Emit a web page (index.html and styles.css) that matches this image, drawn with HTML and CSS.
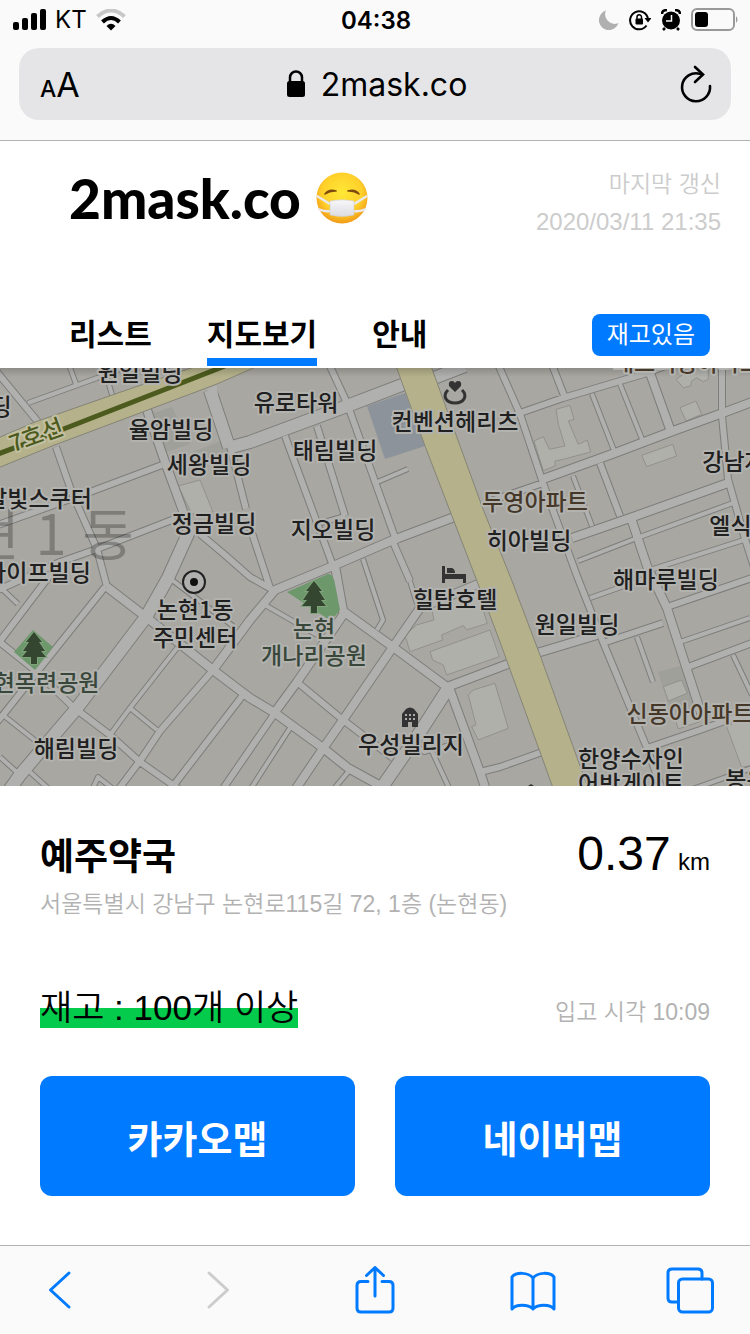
FILE: index.html
```html
<!DOCTYPE html>
<html lang="ko">
<head>
<meta charset="utf-8">
<meta name="viewport" content="width=device-width, initial-scale=1">
<title>2mask.co</title>
<link rel="stylesheet" href="styles.css">
</head>
<body>
<div class="browser-top">
  <div class="status">
    <div class="status-side">
      <svg width="34" height="22" viewBox="0 0 34 22"><rect x="0" y="13" width="6" height="8" rx="2"/><rect x="9" y="9" width="6" height="12" rx="2"/><rect x="18" y="4" width="6" height="17" rx="2"/><rect x="27" y="0" width="6" height="21" rx="2"/></svg>
      <span class="carrier">KT</span>
      <svg width="32" height="22" viewBox="0 0 32 22"><path d="M2.5 7.5Q16-4.500 29.500 7.500" fill="none" stroke="#c7c7c7" stroke-width="4"/><path d="M7.500 13Q16 5 24.500 13" fill="none" stroke="#000" stroke-width="4"/><path d="M11.500 17Q16 12.500 20.500 17L16 21.500Z"/></svg>
    </div>
    <time class="clock">04:38</time>
    <div class="status-side status-right">
      <svg width="20" height="20" viewBox="0 0 20 20"><path d="M7 0.500A10 10 0 1 0 19.500 13A9.500 9.500 0 0 1 7 .5Z" fill="#b0b0b0"/></svg>
      <svg width="22" height="22" viewBox="0 0 22 22"><path d="M17.500 16.500A9 9 0 1 1 19 10" fill="none" stroke="#000" stroke-width="2"/><path d="M15.500 9H22.500L19 13.500Z"/><rect x="6.500" y="9.500" width="7.500" height="6" rx="1"/><path d="M8 10V8a2.200 2.200 0 0 1 4.500 0V10" fill="none" stroke="#000" stroke-width="1.500"/></svg>
      <svg width="20" height="22" viewBox="0 0 20 22"><circle cx="10" cy="11.500" r="9"/><path d="M1 5Q1 1 6 1M19 5Q19 1 14 1M4 19L2 21M16 19L18 21" stroke="#000" stroke-width="2.500" fill="none"/><path d="M10.500 6V12H5" fill="none" stroke="#fafafa" stroke-width="1.500"/></svg>
      <svg width="48" height="24" viewBox="0 0 48 24"><rect x="1" y="1" width="42" height="21" rx="5" fill="none" stroke="#999" stroke-width="2"/><rect x="4" y="4" width="13" height="15" rx="3"/><path d="M45 8Q48 11.500 45 15Z" fill="#999"/></svg>
    </div>
  </div>
  <div class="address-bar">
    <button class="bar-button text-size" aria-label="글자 크기"><span class="small-a">A</span><span class="large-a">A</span></button>
    <button class="bar-button url"><svg width="20" height="28" viewBox="0 0 20 28"><rect x="1" y="11" width="18" height="16" rx="2.500"/><path d="M4 12V7.500a6 6 0 0 1 12 0V12" fill="none" stroke="#000" stroke-width="2.500"/></svg><span>2mask.co</span></button>
    <button class="bar-button reload" aria-label="새로고침"><svg width="34" height="38" viewBox="0 0 34 38"><path d="M21 8.800A14 14 0 1 0 31 21" fill="none" stroke="#000" stroke-width="2.600" stroke-linecap="round"/><path d="M16 2L24 9.500L16 17" fill="none" stroke="#000" stroke-width="2.600" stroke-linecap="round"/></svg></button>
  </div>
</div>

<header class="site-header">
  <div class="brand-row">
    <h1 class="brand">2mask.co
      <svg class="emoji" width="54" height="54" viewBox="0 0 54 54" role="img" aria-label="마스크 얼굴">
        <defs><radialGradient id="face" cx=".5" cy=".4" r=".6"><stop offset="0" stop-color="#ffe936"/><stop offset=".65" stop-color="#ffd02a"/><stop offset="1" stop-color="#f09a18"/></radialGradient>
        <linearGradient id="mask" x2="0" y2="1"><stop offset="0" stop-color="#f8f8fa"/><stop offset="1" stop-color="#dcdce2"/></linearGradient></defs>
        <circle cx="27" cy="27" r="25.500" fill="url(#face)"/>
        <path d="M10 23Q14 17.500 21 20Q15 19.500 10 23ZM44 23Q40 17.500 33 20Q39 19.500 44 23Z" fill="#7b4a0c" stroke="#7b4a0c" stroke-width="1.500" stroke-linejoin="round"/>
        <path d="M2 25L15 33M52 25L39 33M3 38Q9 41 15 40M51 38Q45 41 39 40" fill="none" stroke="#e9e9ef" stroke-width="2.500"/>
        <path d="M15 30Q27 27.500 39 30V44Q27 47 15 44Z" fill="url(#mask)" stroke="#d0ccc8" stroke-width=".6"/>
      </svg>
    </h1>
    <p class="updated"><span class="updated-label">마지막 갱신</span><time>2020/03/11 21:35</time></p>
  </div>
  <div class="nav-row">
    <nav class="tabs">
      <a class="tab" href="#list">리스트</a>
      <a class="tab active" href="#map">지도보기</a>
      <a class="tab" href="#info">안내</a>
    </nav>
    <button class="filter">재고있음</button>
  </div>
</header>

<main class="content">
<svg class="map" id="map" viewBox="0 368 750 418" preserveAspectRatio="xMidYMid slice" role="img" aria-label="지도">
  <defs>
    <linearGradient id="shade" x2="0" y2="1"><stop offset="0" stop-opacity=".18"/><stop offset="1" stop-opacity="0"/></linearGradient>
    <g id="roads" fill="none" stroke-linejoin="round">
      <g class="lane lane-s">
        <path d="M28 403L97 378L125 367M68 362L76 384M107 378L113 398M375 483L408 469M130 708L157 730M177 648L130 708L110 735M3 715L37 742M0 587L18 604M290 728L250 790M423 732L450 790M265 605L317 635M363 559L383 620L377 630M592 394L615 453M620 384L642 439M573 476L592 526M637 538L733 503M637 538L578 561M653 569L747 539M590 598L655 575M680 642L750 618M733 655L752 695M637 637L653 682M690 790L752 768M348 772L333 790M30 772L50 790M0 757L20 775M172 580L233 626M410 581L417 604M345 516L321 523M92 790L98 777L112 788M410 740L424 752L450 745"/>
      </g>
      <g class="lane lane-m">
        <path d="M-3 372L38 422M56 447L72 493L97 549L107 587M162 465L90 492L-2 525M177 518L97 549L60 562L-2 590M230 446L246 509M250 527L270 588M105 587L37 672L3 715L-3 722M-3 640L37 672L73 707L110 735L140 762L180 790M-3 645L60 562M213 670L160 731L142 758L118 790M243 695L177 781L170 790M275 713L220 793M200 534L225 555L250 577L273 590M297 682L343 720L393 758M328 362L347 403L373 476L397 543M285 436L333 566M317 426L345 516M393 542L410 581M497 362L520 414L543 483L577 576L603 642L647 748L662 790M520 413L563 398L647 373L665 366M551 362L565 398M543 483L485 503M722 362L722 416L728 479L745 539L755 570M600 463L620 516M667 607L752 578M688 667L752 643M603 643L663 623M647 748L700 730L752 711M480 772L500 767L545 751"/>
      </g>
      <g class="lane lane-l">
        <path d="M147 410L165 462L190 530M107 587L146 617L213 670L250 698L275 713L323 748L348 768L388 790M213 670L250 620L275 590M270 592L333 566L393 540L457 516M335 566L343 611L393 647L447 687L500 667L537 653L597 635M343 615L297 682L275 712M393 647L343 720L322 750L295 790M450 690L480 772L486 790M393 647L420 608L483 582M650 373L670 429M543 479L615 453L673 431L720 414L752 402M728 483L630 518L572 538M632 521L647 566L667 608L702 716"/>
      </g>
      <g class="lane lane-xl">
        <path d="M192 525L168 578L146 617L77 708L20 775L8 792M228 448L250 442L347 406L407 383M434 378L465 366M447 690L420 732L380 790M210 390L229 447"/>
      </g>
    </g>
    <path id="tree" d="M0-16L8-6H5L11 3H7L12 9H3V16H-3V9H-12L-7 3H-11L-5-6H-8Z"/>
  </defs>
  <rect class="land" y="360" width="750" height="430"/>
  <path class="plot" d="M154 413L172 407L190 444L160 454ZM192 452L224 440L229 455L200 463ZM658 672L684 665L700 712L674 722Z"/>
  <path class="blue-lot" d="M367 406L405 393L425 446L385 459Z"/>
  <g class="building">
    <g transform="translate(500 366) scale(.3333)"><path d="M168 130L210 118L222 160L205 165L235 235L262 222L272 258L190 280L165 285L165 300L130 314L102 225L130 212L148 250L195 240L175 175Z"/><path d="M540 125L588 105L605 145L558 165ZM425 268L518 235L530 270L440 302ZM528 40L550 25L560 0L625 5L625 40L610 47L590 35L575 45L572 60L550 65Z"/></g>
    <g transform="translate(250 575) scale(.3333)"><path d="M540 230L720 165L748 245L590 300L580 270L548 255ZM465 180L500 150L552 135L545 100L680 45L712 145L650 165L640 152L575 180L578 195L480 230ZM655 360L670 345L735 325L775 460L685 495L665 455L678 450Z"/></g>
    <g transform="translate(500 575) scale(.3333)"><path d="M490 335L545 315L562 355L505 378ZM680 455L760 415L760 570L725 577ZM525 430L590 410L600 440L535 462Z"/></g>
    <path d="M178 486L200 480L213 512L192 514Z"/>
  </g>
  <use href="#roads" class="casing"/>
  <use href="#roads" class="surface"/>
  <path class="park" d="M33 630L53 647L35 670L14 652ZM287 592L328 574Q333 573 335 584L340 610L331 621Z"/>
  <path class="avenue" d="M-2 438L35 422L115 394L197 366H258L217 384L52 446L-2 468Z"/>
  <path class="avenue" d="M396 366H431L483 509L512 581L540 655L588 788H553L540 752L500 642L477 581L425 446Z"/>
  <path class="subway" d="M-2 454L38 439L225 366"/>
  <path d="M207 389L217 385L218 396L211 400Z" fill="#b0b0af"/>
  <rect y="367" width="750" height="10" fill="url(#shade)"/>

  <g class="district"><text x="51" y="555">현 1 동</text></g>
  <g class="label">
    <text x="140" y="381">원일빌딩</text><text x="1" y="415">딩</text><text x="171" y="438">율암빌딩</text><text x="296" y="411">유로타워</text>
    <text x="455" y="430">컨벤션헤리츠</text><text x="335" y="459">태림빌딩</text><text x="209" y="473">세왕빌딩</text><text x="39" y="507">달빛스쿠터</text>
    <text x="214" y="532">정금빌딩</text><text x="333" y="538">지오빌딩</text><text x="38" y="581">라이프빌딩</text><text x="195" y="618">논현1동</text>
    <text x="195" y="646">주민센터</text><text x="76" y="757">해림빌딩</text><text x="411" y="753">우성빌리지</text><text x="455" y="608">힐탑호텔</text>
    <text x="529" y="549">히아빌딩</text><text x="734" y="470">강남자</text><text x="741" y="534">엘식빌</text><text x="666" y="588">해마루빌딩</text>
    <text x="577" y="633">원일빌딩</text><text x="631" y="767">한양수자인</text><text x="631" y="792">어반게이트</text><text x="757" y="788">봉은사</text>
  </g>
  <g class="label label-park"><text x="314" y="637">논현</text><text x="314" y="664">개나리공원</text><text x="36" y="691">논현목련공원</text></g>
  <g class="label label-apt"><text x="535" y="510">두영아파트</text><text x="690" y="722">신동아아파트</text><text x="687" y="371">래스리장아파트</text></g>
  <g class="label label-line"><text transform="translate(39 443) rotate(-20)">7호선</text></g>

  <g class="tree"><use href="#tree" x="314" y="597"/><use href="#tree" x="34" y="648"/></g>
  <circle cx="194" cy="582" r="11" fill="#b0b0ae" stroke="#222" stroke-width="2"/><circle cx="194" cy="582" r="4" fill="#111"/>
  <g class="poi">
    <path d="M455 392L449 386Q448 381 452 381Q454 381 455 383Q456 381 458 381Q462 381 461 386Z"/>
    <path d="M448 390C442 396 446 403 455 403C464 403 468 396 462 390" fill="none" stroke="#333" stroke-width="3"/>
    <path d="M442 566H445V574H466V583H463V579H445V583H442ZM447 568H452Q455 569 455 573H447Z"/>
    <path d="M402 727V714L406 709Q410 706 414 709L418 714V727H412V722H408V727Z"/>
    <path d="M405 715H415M405 719H415" stroke="#aaa" stroke-width="2" stroke-dasharray="2 2"/>
    <path d="M528 786H534L531 784Z"/>
  </g>
</svg>

<section class="detail">
  <div class="row">
    <h2 class="name">예주약국</h2>
    <p class="distance">0.37 <span class="unit">km</span></p>
  </div>
  <p class="address">서울특별시 강남구 논현로115길 72, 1층 (논현동)</p>
  <div class="row stock-row">
    <p class="stock">재고 : 100개 이상</p>
    <p class="arrival">입고 시각 10:09</p>
  </div>
  <div class="actions">
    <button class="action">카카오맵</button>
    <button class="action">네이버맵</button>
  </div>
</section>
</main>

<footer class="toolbar">
  <button class="tool" aria-label="뒤로"><svg viewBox="0 0 48 48"><path d="M33 7L14.500 24L33 41"/></svg></button>
  <button class="tool" aria-label="앞으로" disabled><svg viewBox="0 0 48 48"><path d="M15 7L33.500 24L15 41"/></svg></button>
  <button class="tool" aria-label="공유"><svg viewBox="0 0 48 48"><path d="M17 15.500H10Q6 15.500 6 19.500V42Q6 46 10 46H38Q42 46 42 42V19.500Q42 15.500 38 15.500H31M24 30V2M15.500 9.500L24 1.500L32.500 9.500"/></svg></button>
  <button class="tool" aria-label="책갈피"><svg viewBox="0 0 48 48"><path d="M24 12C19 6 7 6 3 11V43C7 38 19 38 24 43C29 38 41 38 45 43V11C41 6 29 6 24 12ZM24 12V43"/></svg></button>
  <button class="tool" aria-label="탭"><svg viewBox="0 0 48 48"><path d="M36 13V7Q36 3 32 3H6Q2 3 2 7V32Q2 36 6 36H12"/><rect x="12.500" y="13" width="34" height="33" rx="4"/></svg></button>
</footer>
</body>
</html>
```
FILE: styles.css
```css
* { box-sizing: border-box; }

body {
  margin: 0;
  min-height: 100vh;
  display: flex;
  flex-direction: column;
  background: #fff;
  color: #000;
  font-family: "Liberation Sans", "Noto Sans CJK KR", sans-serif;
}

h1, h2, p { margin: 0; }

button {
  border: 0;
  padding: 0;
  background: none;
  color: inherit;
  font-family: inherit;
}

.browser-top {
  background: #fafafa;
  border-bottom: 1px solid #b2b2b2;
  padding-bottom: 20px;
  font-family: Inter, sans-serif;
}

.status {
  display: grid;
  grid-template-columns: 1fr auto 1fr;
  align-items: center;
  height: 40px;
  padding: 0 11px 0 13px;
}

.status-side { display: flex; align-items: center; gap: 8px; }
.status-right { justify-content: flex-end; gap: 10px; }
.carrier { font-size: 24px; line-height: 28px; }
.clock { font-size: 24px; font-weight: 600; }

.address-bar {
  display: grid;
  grid-template-columns: 1fr auto 1fr;
  align-items: center;
  height: 72px;
  margin: 8px 19px 0;
  padding: 0 18px 0 21px;
  border-radius: 20px;
  background: #e5e5e7;
}

.bar-button { display: flex; align-items: center; }
.text-size { align-items: baseline; }
.small-a { font-size: 23px; font-weight: 500; }
.large-a { font-size: 34px; }
.url { gap: 15px; font-size: 32px; }
.reload { justify-self: end; }

.site-header { padding: 25px 0 2px 69px; }

.brand-row {
  display: flex;
  justify-content: space-between;
  align-items: flex-start;
  padding-right: 29px;
}

.brand {
  display: flex;
  align-items: center;
  gap: 14px;
  font-family: Lato, sans-serif;
  font-size: 55px;
  font-weight: 900;
  line-height: 64px;
}

.updated {
  display: flex;
  flex-direction: column;
  color: #ccc;
  font-size: 24px;
  line-height: 37px;
  text-align: right;
}

.updated-label { font-size: 23px; font-weight: 350; }

.nav-row {
  display: flex;
  justify-content: space-between;
  align-items: flex-start;
  padding: 74px 40px 0 0;
}

.tabs { display: flex; gap: 55px; }

.tab {
  padding-bottom: 2px;
  border-bottom: 8px solid transparent;
  color: #000;
  font-size: 30px;
  font-weight: 700;
  line-height: 42px;
  text-decoration: none;
}

.tab.active { border-color: #007aff; }

.filter {
  height: 42px;
  padding: 0 15px;
  border-radius: 8px;
  background: #007aff;
  color: #fff;
  font-size: 24px;
  line-height: 42px;
}

.content { flex: 1; display: flex; flex-direction: column; }

.map {
  display: block;
  width: 100%;
  height: 418px;
  font-family: "Noto Sans CJK KR", sans-serif;
}

.land { fill: #a8a7a1; }
.plot { fill: #a0a09b; }
.blue-lot { fill: #8c939a; }
.building { fill: #b0b0ab; stroke: #92918d; stroke-width: 3px; }
.building > path { stroke-width: 1px; }
.park { fill: #6d986b; }
.avenue { fill: #b4b18b; stroke: #858477; stroke-width: 1px; }
.subway { fill: none; stroke: #4c5b1d; stroke-width: 5px; }

.casing { stroke: #7d7d7b; --edge: 2px; }
.surface { stroke: #b0b0af; --edge: 0px; }
.lane-s { stroke-width: calc(4px + var(--edge)); }
.lane-m { stroke-width: calc(6px + var(--edge)); }
.lane-l { stroke-width: calc(8px + var(--edge)); }
.lane-xl { stroke-width: calc(12px + var(--edge)); }

.label {
  fill: #202020;
  stroke: #b2b2af;
  stroke-width: 4px;
  stroke-linejoin: round;
  paint-order: stroke;
  font-size: 23px;
  font-weight: 500;
  text-anchor: middle;
}

.label-park { fill: #38473a; }
.label-apt { fill: #463828; }
.label-line { fill: #4c5b1d; stroke: #c3c0a2; }

.district {
  fill: #000;
  fill-opacity: .25;
  font-size: 56px;
  font-weight: 400;
  text-anchor: middle;
}

.tree { fill: #34462f; stroke: #7fa47c; stroke-width: 2px; paint-order: stroke; }
.poi { fill: #333; }

.detail { padding: 40px; }

.row { display: flex; justify-content: space-between; align-items: baseline; }

.name { font-size: 37px; font-weight: 700; line-height: 56px; }
.distance { font-size: 48px; line-height: 56px; }
.unit { font-size: 24px; margin-left: -6px; }

.address {
  color: #b2b2b2;
  font-size: 23px;
  font-weight: 350;
  line-height: 28px;
}

.stock-row { margin-top: 70px; }

.stock {
  background: linear-gradient(transparent 50%, #05cb4c 50%);
  font-size: 35px;
  font-weight: 350;
  line-height: 40px;
}

.arrival { color: #b2b2b2; font-size: 23px; font-weight: 350; line-height: 40px; }

.actions {
  display: grid;
  grid-template-columns: 1fr 1fr;
  gap: 40px;
  margin-top: 44px;
}

.action {
  height: 120px;
  border-radius: 12px;
  background: #007aff;
  color: #fff;
  font-size: 38px;
  font-weight: 700;
}

.toolbar {
  display: flex;
  justify-content: space-between;
  align-items: center;
  height: 89px;
  padding: 0 36px;
  border-top: 1px solid #b2b2b2;
  background: #fafafa;
}

.tool { width: 48px; height: 48px; color: #007aff; }
.tool:disabled { color: #ccc; }

.tool svg {
  display: block;
  fill: none;
  stroke: currentColor;
  stroke-width: 3px;
  stroke-linecap: round;
  stroke-linejoin: round;
}
```
